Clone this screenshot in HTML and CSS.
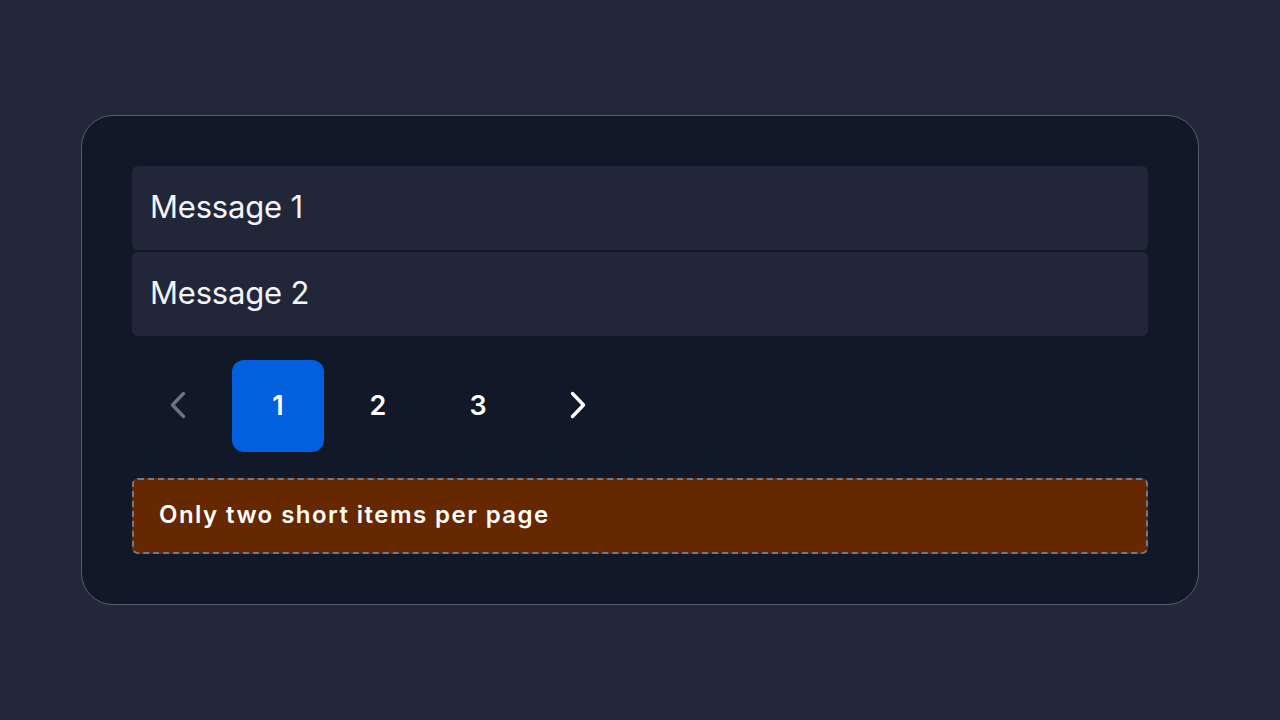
FILE: index.html
```html
<!DOCTYPE html>
<html lang="en">
<head>
<meta charset="utf-8">
<title>Pagination</title>
<link rel="stylesheet" href="styles.css">
</head>
<body>
  <main class="card">
    <ul class="messages">
      <li class="message">Message 1</li>
      <li class="message">Message 2</li>
    </ul>
    <nav class="pager" aria-label="Pagination">
      <button class="page-btn arrow disabled" aria-label="Previous page">
        <svg width="28" height="28" viewBox="0 0 28 28" fill="none" stroke="currentColor" stroke-width="3.4" stroke-linecap="round" stroke-linejoin="round"><path d="M19.5 2.5l-11 11.5 11 11.5"/></svg>
      </button>
      <button class="page-btn active">1</button>
      <button class="page-btn">2</button>
      <button class="page-btn">3</button>
      <button class="page-btn arrow" aria-label="Next page">
        <svg width="28" height="28" viewBox="0 0 28 28" fill="none" stroke="currentColor" stroke-width="3.4" stroke-linecap="round" stroke-linejoin="round"><path d="M8.5 2.5l11 11.5-11 11.5"/></svg>
      </button>
    </nav>
    <div class="notice">Only two short items per page</div>
  </main>
</body>
</html>
```
FILE: styles.css
```css
* { box-sizing: border-box; }
html, body { margin: 0; padding: 0; }
body {
  background: #22273a;
  font-family: "Inter", "Noto Sans", sans-serif;
  color: #f3f5f9;
  min-height: 720px;
  padding: 115px 81px 0;
}
.card {
  background: #111827;
  border: 1.5px solid #525d73;
  border-radius: 32px;
  padding: 50px;
  display: flex;
  flex-direction: column;
}
.messages {
  list-style: none;
  margin: 0;
  padding: 0;
  display: flex;
  flex-direction: column;
  gap: 2px;
}
.message {
  background: #212738;
  border-radius: 6px;
  height: 84px;
  display: flex;
  align-items: center;
  padding: 0 18px 3px;
  font-size: 31px;
  font-weight: 400;
  letter-spacing: -0.2px;
  color: #f3f5f9;
}
.pager {
  display: flex;
  gap: 8px;
  margin-top: 24px;
}
.page-btn {
  width: 92px;
  height: 92px;
  border: 0;
  border-radius: 12px;
  background: transparent;
  color: #ffffff;
  font-family: inherit;
  font-size: 27px;
  font-weight: 600;
  display: flex;
  align-items: center;
  justify-content: center;
  padding: 0 0 2px;
}
.page-btn.active { background: #025fdd; }
.page-btn.disabled { color: #6b7280; }
.notice {
  margin-top: 26px;
  background: #662800;
  border: 2px dashed #6b7a92;
  border-radius: 6px;
  height: 76px;
  display: flex;
  align-items: center;
  padding: 0 25px 4px;
  font-size: 24px;
  font-weight: 600;
  letter-spacing: 1.45px;
  color: #ffffff;
}
```
